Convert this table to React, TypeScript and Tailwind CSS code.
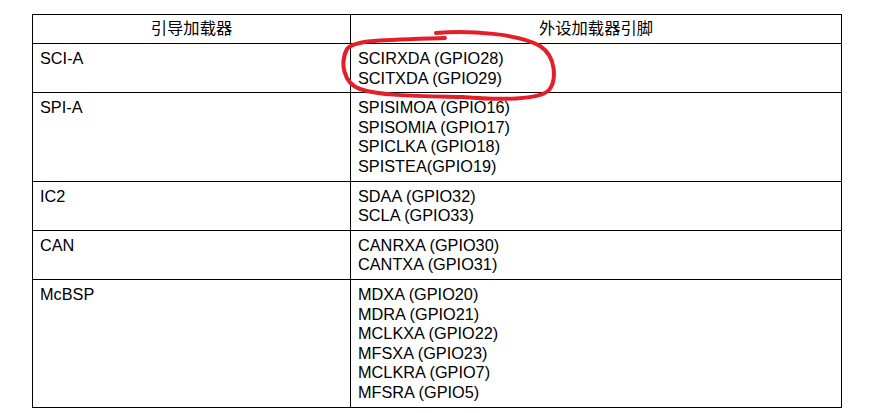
import React from 'react';

const rows = [
    { boot: 'SCI-A', pins: ['SCIRXDA (GPIO28)', 'SCITXDA (GPIO29)'] },
    { boot: 'SPI-A', pins: ['SPISIMOA (GPIO16)', 'SPISOMIA (GPIO17)', 'SPICLKA (GPIO18)', 'SPISTEA(GPIO19)'] },
    { boot: 'IC2', pins: ['SDAA (GPIO32)', 'SCLA (GPIO33)'] },
    { boot: 'CAN', pins: ['CANRXA (GPIO30)', 'CANTXA (GPIO31)'] },
    {
        boot: 'McBSP',
        pins: ['MDXA (GPIO20)', 'MDRA (GPIO21)', 'MCLKXA (GPIO22)', 'MFSXA (GPIO23)', 'MCLKRA (GPIO7)', 'MFSRA (GPIO5)'],
    },
];

export default function App() {
    return (
        <div className="w-[891px] h-[413px] bg-white relative overflow-hidden font-['Liberation_Sans','Noto_Sans_CJK_SC',sans-serif] text-black">
            <div className="pl-[32px] pt-[14px]">
                <table className="border-collapse w-[810px] table-fixed text-[16.3px] leading-[19.6px]">
                    <colgroup>
                        <col className="w-[318px]" />
                        <col />
                    </colgroup>
                    <thead>
                        <tr className="h-[29px]">
                            <th className="border border-black font-normal text-center align-middle">引导加载器</th>
                            <th className="border border-black font-normal text-center align-middle">外设加载器引脚</th>
                        </tr>
                    </thead>
                    <tbody>
                        {rows.map((row) => (
                            <tr key={row.boot}>
                                <td className="border border-black align-top pl-[7px] pt-[5px] pb-[4px]">{row.boot}</td>
                                <td className="border border-black align-top pl-[7px] pt-[5px] pb-[4px]">
                                    {row.pins.map((pin) => (
                                        <div key={pin}>{pin}</div>
                                    ))}
                                </td>
                            </tr>
                        ))}
                    </tbody>
                </table>
            </div>

            {/* hand-drawn red loop */}
            <svg className="absolute left-0 top-0 pointer-events-none" width="891" height="413">
                <path
                    d="M 436 33 C 470 30, 520 34, 540 46 C 556 56, 557 80, 549 90 C 540 100, 500 100, 462 97 C 420 96, 380 96, 360 89 C 343 83, 340 62, 347 49 C 354 40, 380 40, 445 38"
                    fill="none"
                    stroke="#e3202a"
                    strokeWidth="4"
                    strokeLinecap="round"
                    strokeLinejoin="round"
                />
            </svg>
        </div>
    );
}
